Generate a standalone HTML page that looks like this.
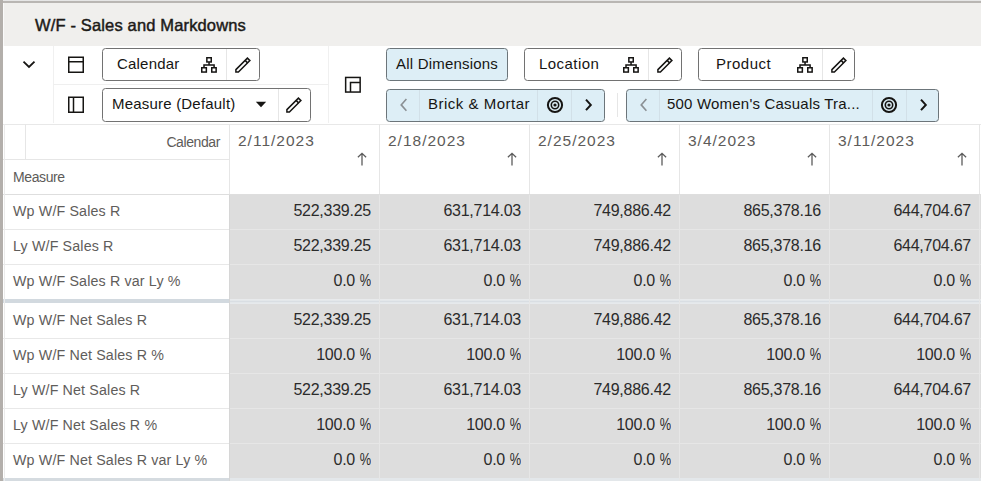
<!DOCTYPE html>
<html><head><meta charset="utf-8">
<style>
*{box-sizing:border-box;margin:0;padding:0}
html,body{width:981px;height:481px;overflow:hidden;background:#fff;font-family:"Liberation Sans",sans-serif;color:#161513}
.abs{position:absolute}
#topb{left:0;top:0;width:981px;height:3px;background:#b9b6b3;border-top:1px solid #e6e6e6}
#leftb{left:0;top:0;width:3px;height:481px;background:#b3afab}
#title{left:3px;top:3px;width:978px;height:43px;background:#f0efed;border-left:1px solid #fafafa}
#title span{position:absolute;left:31px;top:12px;font-size:16.5px;line-height:20px;font-weight:normal;letter-spacing:0.15px;-webkit-text-stroke:0.45px #1c1a18;color:#1c1a18;white-space:nowrap}
.vl{position:absolute;width:1px;background:#ededed}
.hl{position:absolute;height:1px;background:#ededed}
.btn{position:absolute;height:33px;border:1px solid #727272;border-radius:3.5px;background:#fff;font-size:15px;white-space:nowrap}
.btn .t{position:absolute;top:5px;line-height:20px;letter-spacing:0.2px}
.blue{background:#ddeef6;border-color:#6c757a}
.div{position:absolute;top:0;bottom:0;width:1px;background:#e6e6e6}
.blue .div{background:#d2e0e8}
svg{position:absolute;overflow:visible}
.hdr{position:absolute;font-size:14px;line-height:16px;letter-spacing:-0.4px;white-space:nowrap;color:#5d5b59}
.date{position:absolute;font-size:15.5px;line-height:18px;white-space:nowrap;color:#5d5b59;letter-spacing:1.0px}
.rh{position:absolute;font-size:14.25px;line-height:18px;white-space:nowrap;color:#5f5d5b;letter-spacing:0.15px}
.num{position:absolute;font-size:16px;line-height:18px;white-space:nowrap;color:#2b2b2b;letter-spacing:-0.25px;word-spacing:-2.2px}
.pct{display:inline-block;transform:scaleX(0.8);transform-origin:100% 50%}
</style></head><body>
<div id="topb" class="abs"></div>
<div id="leftb" class="abs"></div>
<div id="title" class="abs"><span>W/F - Sales and Markdowns</span></div>
<div class="vl" style="left:53px;top:46px;height:77px;background:#f0f0f0"></div>
<div class="hl" style="left:53px;top:84px;width:275px;background:#efefef"></div>
<div class="vl" style="left:328px;top:46px;height:77px;background:#f0f0f0"></div>
<svg style="left:20px;top:58px" width="18" height="12" viewBox="0 0 18 12"><path d="M3.5 3.6 L9 9 L14.5 3.6" fill="none" stroke="#161513" stroke-width="1.8"/></svg>
<svg style="left:66px;top:54px" width="20" height="20" viewBox="0 0 20 20"><g fill="none" stroke="#161513" stroke-width="1.5"><rect x="2.75" y="3.25" width="14.5" height="15"/><path d="M2.75 7.75 H17.25"/></g></svg>
<svg style="left:66px;top:94px" width="20" height="20" viewBox="0 0 20 20"><g fill="none" stroke="#161513" stroke-width="1.5"><rect x="2.75" y="3.25" width="14.5" height="15"/><path d="M7.5 3.25 V18.25"/></g></svg>
<svg style="left:343px;top:75px" width="20" height="20" viewBox="0 0 20 20"><g fill="none" stroke="#161513" stroke-width="1.5"><rect x="2.65" y="2.45" width="14.5" height="14.6"/><path d="M7.5 17 V7.5 H17"/></g></svg>
<div class="btn" style="left:102px;top:48px;width:158px"><span class="t" style="left:14px">Calendar</span><div class="div" style="left:123px"></div></div>
<svg style="left:201px;top:57px" width="18" height="18" viewBox="0 0 18 18"><g fill="none" stroke="#161513" stroke-width="1.5"><rect x="5.85" y="0.75" width="4.4" height="4.2"/><rect x="0.75" y="10.75" width="4.6" height="4.3"/><rect x="10.75" y="10.75" width="4.4" height="4.3"/><path d="M8.05 5 V8 M3 8 H13.1 M3 7.3 V10.8 M13.1 7.3 V10.8"/></g></svg>
<svg style="left:235px;top:57px" width="18" height="18" viewBox="0 0 18 18"><g fill="none" stroke="#161513" stroke-width="1.5" stroke-linejoin="miter"><path d="M0.9 12.6 L12.4 1.1 L14.9 3.6 L3.4 15.1 L0.9 15.1 Z"/><path d="M10.1 3.4 L12.6 5.9"/></g></svg>
<div class="btn" style="left:102px;top:88px;width:209px;height:34px"><span class="t" style="left:9px">Measure (Default)</span><div class="div" style="left:175px"></div></div>
<svg style="left:255px;top:101px" width="12" height="7" viewBox="0 0 12 7"><path d="M0.8 0.8 H11.2 L6 6.2 Z" fill="#161513"/></svg>
<svg style="left:286px;top:97px" width="18" height="18" viewBox="0 0 18 18"><g fill="none" stroke="#161513" stroke-width="1.5" stroke-linejoin="miter"><path d="M0.9 12.6 L12.4 1.1 L14.9 3.6 L3.4 15.1 L0.9 15.1 Z"/><path d="M10.1 3.4 L12.6 5.9"/></g></svg>
<div class="btn blue" style="left:386px;top:48px;width:122px"><span class="t" style="left:9px">All Dimensions</span></div>
<div class="btn" style="left:524px;top:48px;width:158px"><span class="t" style="left:14px;letter-spacing:0.45px">Location</span><div class="div" style="left:123px"></div></div>
<svg style="left:623px;top:57px" width="18" height="18" viewBox="0 0 18 18"><g fill="none" stroke="#161513" stroke-width="1.5"><rect x="5.85" y="0.75" width="4.4" height="4.2"/><rect x="0.75" y="10.75" width="4.6" height="4.3"/><rect x="10.75" y="10.75" width="4.4" height="4.3"/><path d="M8.05 5 V8 M3 8 H13.1 M3 7.3 V10.8 M13.1 7.3 V10.8"/></g></svg>
<svg style="left:657px;top:57px" width="18" height="18" viewBox="0 0 18 18"><g fill="none" stroke="#161513" stroke-width="1.5" stroke-linejoin="miter"><path d="M0.9 12.6 L12.4 1.1 L14.9 3.6 L3.4 15.1 L0.9 15.1 Z"/><path d="M10.1 3.4 L12.6 5.9"/></g></svg>
<div class="btn" style="left:698px;top:48px;width:157px"><span class="t" style="left:17px;letter-spacing:0.5px">Product</span><div class="div" style="left:123px"></div></div>
<svg style="left:797px;top:57px" width="18" height="18" viewBox="0 0 18 18"><g fill="none" stroke="#161513" stroke-width="1.5"><rect x="5.85" y="0.75" width="4.4" height="4.2"/><rect x="0.75" y="10.75" width="4.6" height="4.3"/><rect x="10.75" y="10.75" width="4.4" height="4.3"/><path d="M8.05 5 V8 M3 8 H13.1 M3 7.3 V10.8 M13.1 7.3 V10.8"/></g></svg>
<svg style="left:831px;top:57px" width="18" height="18" viewBox="0 0 18 18"><g fill="none" stroke="#161513" stroke-width="1.5" stroke-linejoin="miter"><path d="M0.9 12.6 L12.4 1.1 L14.9 3.6 L3.4 15.1 L0.9 15.1 Z"/><path d="M10.1 3.4 L12.6 5.9"/></g></svg>
<div class="btn blue" style="left:386px;top:89px;width:219px"><div class="div" style="left:32px"></div><span class="t" style="left:41px;top:4px;letter-spacing:0.5px">Brick &amp; Mortar</span><div class="div" style="left:150px"></div><div class="div" style="left:184px"></div></div>
<svg style="left:400px;top:98px" width="10" height="14" viewBox="0 0 10 14"><path d="M6.4 1 L1.2 6.9 L6.4 12.8" fill="none" stroke="#8a8f93" stroke-width="1.6"/></svg>
<svg style="left:546px;top:96px" width="18" height="18" viewBox="0 0 18 18"><circle cx="9" cy="9" r="7.1" fill="none" stroke="#161513" stroke-width="2"/><circle cx="9" cy="9" r="3.7" fill="none" stroke="#161513" stroke-width="1.6"/><circle cx="9" cy="9" r="1.6" fill="#161513"/></svg>
<svg style="left:584.5px;top:98px" width="10" height="14" viewBox="0 0 10 14"><path d="M1 1.6 L5.8 6.9 L1 12.2" fill="none" stroke="#161513" stroke-width="2"/></svg>
<div class="vl" style="left:617px;top:93px;height:24px;background:#e6e6e6"></div>
<div class="btn blue" style="left:626px;top:89px;width:313px"><div class="div" style="left:32px"></div><span class="t" style="left:40px;top:4px;letter-spacing:0.2px">500 Women's Casuals Tra...</span><div class="div" style="left:245px"></div><div class="div" style="left:279px"></div></div>
<svg style="left:640px;top:98px" width="10" height="14" viewBox="0 0 10 14"><path d="M6.4 1 L1.2 6.9 L6.4 12.8" fill="none" stroke="#8a8f93" stroke-width="1.6"/></svg>
<svg style="left:880px;top:96px" width="18" height="18" viewBox="0 0 18 18"><circle cx="9" cy="9" r="7.1" fill="none" stroke="#161513" stroke-width="2"/><circle cx="9" cy="9" r="3.7" fill="none" stroke="#161513" stroke-width="1.6"/><circle cx="9" cy="9" r="1.6" fill="#161513"/></svg>
<svg style="left:919.5px;top:98px" width="10" height="14" viewBox="0 0 10 14"><path d="M1 1.6 L5.8 6.9 L1 12.2" fill="none" stroke="#161513" stroke-width="2"/></svg>
<div class="hl" style="left:3px;top:124px;width:978px;background:#e8e8e8"></div>
<div class="vl" style="left:25px;top:124px;height:35px;background:#e6e6e6"></div>
<div class="hl" style="left:3px;top:159px;width:226px;background:#e6e6e6"></div>
<span class="hdr" style="right:761px;top:134px">Calendar</span>
<span class="hdr" style="left:13px;top:169px">Measure</span>
<span class="date" style="left:238px;top:132px">2/11/2023</span>
<svg style="left:356px;top:152px" width="12" height="16" viewBox="0 0 12 16"><path d="M6 13.6 V1.6 M1.9 5.3 L6 1.3 L10.1 5.3" fill="none" stroke="#5c5c5c" stroke-width="1.3"/></svg>
<span class="date" style="left:388px;top:132px">2/18/2023</span>
<svg style="left:506px;top:152px" width="12" height="16" viewBox="0 0 12 16"><path d="M6 13.6 V1.6 M1.9 5.3 L6 1.3 L10.1 5.3" fill="none" stroke="#5c5c5c" stroke-width="1.3"/></svg>
<span class="date" style="left:538px;top:132px">2/25/2023</span>
<svg style="left:656px;top:152px" width="12" height="16" viewBox="0 0 12 16"><path d="M6 13.6 V1.6 M1.9 5.3 L6 1.3 L10.1 5.3" fill="none" stroke="#5c5c5c" stroke-width="1.3"/></svg>
<span class="date" style="left:688px;top:132px">3/4/2023</span>
<svg style="left:806px;top:152px" width="12" height="16" viewBox="0 0 12 16"><path d="M6 13.6 V1.6 M1.9 5.3 L6 1.3 L10.1 5.3" fill="none" stroke="#5c5c5c" stroke-width="1.3"/></svg>
<span class="date" style="left:838px;top:132px">3/11/2023</span>
<svg style="left:956px;top:152px" width="12" height="16" viewBox="0 0 12 16"><path d="M6 13.6 V1.6 M1.9 5.3 L6 1.3 L10.1 5.3" fill="none" stroke="#5c5c5c" stroke-width="1.3"/></svg>
<div class="vl" style="left:229px;top:124px;height:70px;background:#e6e6e6"></div>
<div class="vl" style="left:379px;top:124px;height:70px;background:#e6e6e6"></div>
<div class="vl" style="left:529px;top:124px;height:70px;background:#e6e6e6"></div>
<div class="vl" style="left:679px;top:124px;height:70px;background:#e6e6e6"></div>
<div class="vl" style="left:829px;top:124px;height:70px;background:#e6e6e6"></div>
<div class="vl" style="left:979px;top:124px;height:70px;background:#e6e6e6"></div>
<div class="hl" style="left:3px;top:194px;width:978px;background:#dedede"></div>
<div class="abs" style="left:229px;top:195px;width:752px;height:286px;background:#dddddd"></div>
<span class="rh" style="left:13px;top:202px">Wp W/F Sales R</span>
<span class="num" style="right:610px;top:202px">522,339.25</span>
<span class="num" style="right:460px;top:202px">631,714.03</span>
<span class="num" style="right:310px;top:202px">749,886.42</span>
<span class="num" style="right:160px;top:202px">865,378.16</span>
<span class="num" style="right:10px;top:202px">644,704.67</span>
<div class="hl" style="left:3px;top:229px;width:226px;background:#e8e8e8"></div>
<div class="hl" style="left:229px;top:229px;width:752px;background:#e6e6e6"></div>
<span class="rh" style="left:13px;top:237px">Ly W/F Sales R</span>
<span class="num" style="right:610px;top:237px">522,339.25</span>
<span class="num" style="right:460px;top:237px">631,714.03</span>
<span class="num" style="right:310px;top:237px">749,886.42</span>
<span class="num" style="right:160px;top:237px">865,378.16</span>
<span class="num" style="right:10px;top:237px">644,704.67</span>
<div class="hl" style="left:3px;top:264px;width:226px;background:#e8e8e8"></div>
<div class="hl" style="left:229px;top:264px;width:752px;background:#e6e6e6"></div>
<span class="rh" style="left:13px;top:272px">Wp W/F Sales R var Ly %</span>
<span class="num" style="right:610px;top:272px">0.0 <span class="pct">%</span></span>
<span class="num" style="right:460px;top:272px">0.0 <span class="pct">%</span></span>
<span class="num" style="right:310px;top:272px">0.0 <span class="pct">%</span></span>
<span class="num" style="right:160px;top:272px">0.0 <span class="pct">%</span></span>
<span class="num" style="right:10px;top:272px">0.0 <span class="pct">%</span></span>
<div class="hl" style="left:3px;top:299px;width:226px;background:#e8e8e8"></div>
<div class="hl" style="left:229px;top:299px;width:752px;background:#e6e6e6"></div>
<div class="abs" style="left:3px;top:299px;width:226px;height:4px;background:#d2d9df"></div>
<div class="abs" style="left:229px;top:299px;width:752px;height:5px;background:#e3e7ea;border-top:1px solid #e8eaec;border-bottom:1px solid #e6e9ec"></div>
<div class="abs" style="left:229px;top:301px;width:752px;height:1px;background:#d9dee3"></div>
<span class="rh" style="left:13px;top:311px">Wp W/F Net Sales R</span>
<span class="num" style="right:610px;top:311px">522,339.25</span>
<span class="num" style="right:460px;top:311px">631,714.03</span>
<span class="num" style="right:310px;top:311px">749,886.42</span>
<span class="num" style="right:160px;top:311px">865,378.16</span>
<span class="num" style="right:10px;top:311px">644,704.67</span>
<div class="hl" style="left:3px;top:338px;width:226px;background:#e8e8e8"></div>
<div class="hl" style="left:229px;top:338px;width:752px;background:#e6e6e6"></div>
<span class="rh" style="left:13px;top:346px">Wp W/F Net Sales R %</span>
<span class="num" style="right:610px;top:346px">100.0 <span class="pct">%</span></span>
<span class="num" style="right:460px;top:346px">100.0 <span class="pct">%</span></span>
<span class="num" style="right:310px;top:346px">100.0 <span class="pct">%</span></span>
<span class="num" style="right:160px;top:346px">100.0 <span class="pct">%</span></span>
<span class="num" style="right:10px;top:346px">100.0 <span class="pct">%</span></span>
<div class="hl" style="left:3px;top:373px;width:226px;background:#e8e8e8"></div>
<div class="hl" style="left:229px;top:373px;width:752px;background:#e6e6e6"></div>
<span class="rh" style="left:13px;top:381px">Ly W/F Net Sales R</span>
<span class="num" style="right:610px;top:381px">522,339.25</span>
<span class="num" style="right:460px;top:381px">631,714.03</span>
<span class="num" style="right:310px;top:381px">749,886.42</span>
<span class="num" style="right:160px;top:381px">865,378.16</span>
<span class="num" style="right:10px;top:381px">644,704.67</span>
<div class="hl" style="left:3px;top:408px;width:226px;background:#e8e8e8"></div>
<div class="hl" style="left:229px;top:408px;width:752px;background:#e6e6e6"></div>
<span class="rh" style="left:13px;top:416px">Ly W/F Net Sales R %</span>
<span class="num" style="right:610px;top:416px">100.0 <span class="pct">%</span></span>
<span class="num" style="right:460px;top:416px">100.0 <span class="pct">%</span></span>
<span class="num" style="right:310px;top:416px">100.0 <span class="pct">%</span></span>
<span class="num" style="right:160px;top:416px">100.0 <span class="pct">%</span></span>
<span class="num" style="right:10px;top:416px">100.0 <span class="pct">%</span></span>
<div class="hl" style="left:3px;top:443px;width:226px;background:#e8e8e8"></div>
<div class="hl" style="left:229px;top:443px;width:752px;background:#e6e6e6"></div>
<span class="rh" style="left:13px;top:451px">Wp W/F Net Sales R var Ly %</span>
<span class="num" style="right:610px;top:451px">0.0 <span class="pct">%</span></span>
<span class="num" style="right:460px;top:451px">0.0 <span class="pct">%</span></span>
<span class="num" style="right:310px;top:451px">0.0 <span class="pct">%</span></span>
<span class="num" style="right:160px;top:451px">0.0 <span class="pct">%</span></span>
<span class="num" style="right:10px;top:451px">0.0 <span class="pct">%</span></span>
<div class="hl" style="left:3px;top:478px;width:226px;background:#e8e8e8"></div>
<div class="hl" style="left:229px;top:478px;width:752px;background:#e6e6e6"></div>
<div class="abs" style="left:3px;top:478px;width:226px;height:3px;background:#d5dbe0"></div>
<div class="abs" style="left:229px;top:478px;width:752px;height:3px;background:#e3e7ea"></div>
<div class="vl" style="left:379px;top:195px;height:286px;background:#e6e6e6"></div>
<div class="vl" style="left:529px;top:195px;height:286px;background:#e6e6e6"></div>
<div class="vl" style="left:679px;top:195px;height:286px;background:#e6e6e6"></div>
<div class="vl" style="left:829px;top:195px;height:286px;background:#e6e6e6"></div>
<div class="vl" style="left:979px;top:195px;height:286px;background:#e6e6e6"></div>
<div class="vl" style="left:229px;top:195px;height:286px;background:#d6d6d6"></div>
<div class="vl" style="left:4px;top:124px;height:357px;background:#ebebeb"></div>
</body></html>
